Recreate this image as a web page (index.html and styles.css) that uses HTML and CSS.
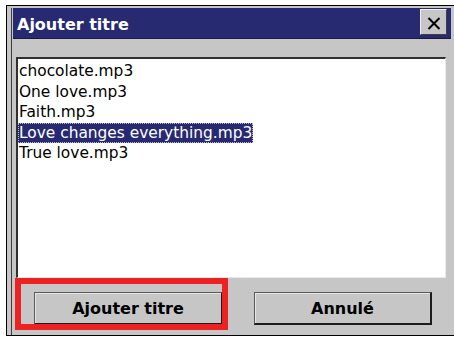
FILE: index.html
```html
<!DOCTYPE html>
<html lang="fr">
<head>
<meta charset="utf-8">
<title>Ajouter titre</title>
<link rel="stylesheet" href="styles.css">
</head>
<body>
<div class="window">
  <div class="dialog">
    <div class="titlebar">
      <span class="title">Ajouter titre</span>
      <div class="close">
        <svg width="14" height="13" viewBox="0 0 14 13"><path d="M1.5 1 L12.5 12 M12.5 1 L1.5 12" stroke="#000" stroke-width="2" fill="none"/></svg>
      </div>
    </div>
    <div class="body">
      <ul class="list">
        <li class="item">chocolate.mp3</li>
        <li class="item">One love.mp3</li>
        <li class="item">Faith.mp3</li>
        <li class="item selected">Love changes everything.mp3</li>
        <li class="item">True love.mp3</li>
      </ul>
      <div class="buttons">
        <div class="btn btn-add">Ajouter titre</div>
        <div class="btn btn-cancel">Annulé</div>
      </div>
    </div>
  </div>
  <div class="mark"></div>
</div>
</body>
</html>
```

FILE: styles.css
```css
html, body {
  margin: 0;
  padding: 0;
  background: #fff;
}
body {
  width: 454px;
  height: 337px;
  overflow: hidden;
  font-family: "DejaVu Sans", sans-serif;
}
.window {
  position: relative;
  box-sizing: border-box;
  margin: 5px 0 0 6px;
  width: 448px;
  height: 331px;
  border-top: 1px solid #000;
  border-left: 1px solid #000;
  border-bottom: 1px solid #000;
  background: #c6c6c6;
  padding: 2px 0 0 4px;
}
.dialog {
  height: 100%;
  border-left: 1px solid #3c3c3c;
  padding-left: 1px;
  display: flex;
  flex-direction: column;
}
.titlebar {
  height: 31px;
  margin-right: 3px;
  background: #272a70;
  display: flex;
  align-items: flex-start;
  justify-content: space-between;
  border-bottom: 1px solid #1a1a40;
  box-sizing: border-box;
}
.title {
  color: #fff;
  font-weight: bold;
  font-size: 16px;
  line-height: 31px;
  padding: 1px 0 0 4px;
}
.close {
  box-sizing: border-box;
  width: 27px;
  height: 26px;
  margin: 1px 4px 0 0;
  background: #c6c6c6;
  border-top: 1px solid #f0f0f0;
  border-left: 1px solid #f0f0f0;
  border-right: 1px solid #404040;
  border-bottom: 1px solid #404040;
  display: flex;
  align-items: center;
  justify-content: center;
  padding-top: 2px;
}
.body {
  padding-top: 18px;
  display: flex;
  flex-direction: column;
}
.list {
  box-sizing: border-box;
  list-style: none;
  margin: 0 0 0 3px;
  padding: 2px 0 0 0;
  width: 430px;
  height: 221px;
  background: #fff;
  border-top: 2px solid #303030;
  border-left: 2px solid #303030;
  border-right: 1px solid #e8e8e8;
  border-bottom: 1px solid #e8e8e8;
  font-size: 15.4px;
  line-height: 20.5px;
  color: #000;
}
.item {
  padding-left: 1px;
  width: fit-content;
  height: 20.5px;
}
.item.selected {
  background: #272a70;
  color: #fff;
  box-sizing: border-box;
  outline: 1px dotted #b8b8e0;
  outline-offset: -1px;
  padding-right: 1px;
}
.buttons {
  display: flex;
  gap: 31px;
  margin-top: 14px;
  padding-left: 21px;
}
.btn {
  box-sizing: border-box;
  height: 33px;
  background: #c6c6c6;
  border-top: 1px solid #5a5a5a;
  border-left: 1px solid #5a5a5a;
  border-right: 2px solid #1c1c1c;
  border-bottom: 2px solid #1c1c1c;
  box-shadow: inset 1px 1px 0 #e6e6e6;
  display: flex;
  align-items: center;
  justify-content: center;
  font-weight: bold;
  font-size: 16px;
  color: #000;
}
.btn-add {
  width: 189px;
}
.btn-cancel {
  width: 178px;
}
.mark {
  position: absolute;
  left: 8px;
  top: 272px;
  width: 213px;
  height: 52px;
  box-sizing: border-box;
  border: 6px solid #ec2222;
}
```
